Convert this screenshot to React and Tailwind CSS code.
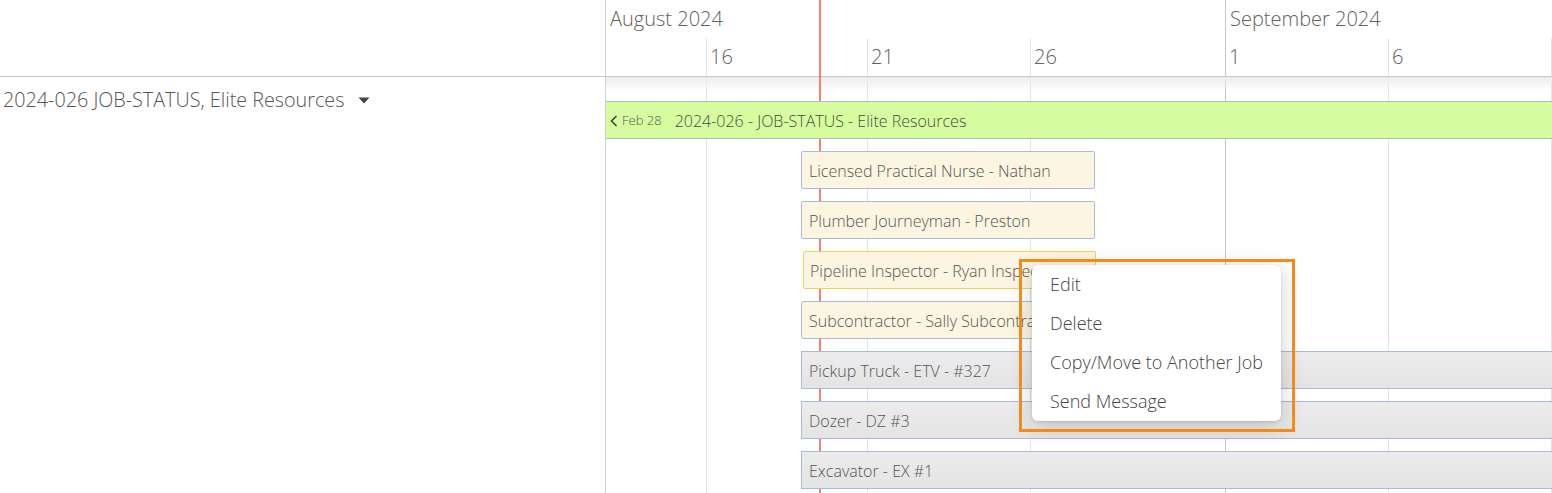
import React from "react";

const events = [
  { label: "Licensed Practical Nurse - Nathan", kind: "cream" },
  { label: "Plumber Journeyman - Preston", kind: "cream" },
  { label: "Pipeline Inspector - Ryan Inspector", kind: "yellow" },
  { label: "Subcontractor - Sally Subcontractor", kind: "cream" },
  { label: "Pickup Truck - ETV - #327", kind: "gray" },
  { label: "Dozer - DZ #3", kind: "gray" },
  { label: "Excavator - EX #1", kind: "gray" },
];

function EventBar({ label, kind }) {
  if (kind === "gray") {
    return (
      <div className="ml-[195px] h-[38px] shrink-0 flex items-center pt-[1px] pl-[7px] border border-r-0 border-[#a9bbdc] bg-gradient-to-b from-[#ececec] to-[#e4e4e4] text-[16px] text-[#555] whitespace-nowrap overflow-hidden">
        {label}
      </div>
    );
  }
  if (kind === "yellow") {
    return (
      <div className="ml-[197px] w-[293px] h-[38px] shrink-0 flex items-center pt-[1px] pl-[6px] border border-[#f2d35a] rounded-[2px] bg-[#fcf5e2] text-[16px] text-[#555] whitespace-nowrap overflow-hidden">
        {label}
      </div>
    );
  }
  return (
    <div className="ml-[195px] w-[294px] h-[38px] shrink-0 flex items-center pt-[1px] pl-[7px] border border-[#a9bbdc] rounded-[2px] bg-[#fcf5e2] text-[16px] text-[#555] whitespace-nowrap overflow-hidden">
      {label}
    </div>
  );
}

export default function App() {
  return (
    <div className="relative w-[1552px] h-[493px] overflow-hidden bg-white font-['Open_Sans',sans-serif] font-light text-[#555] flex flex-col">
      {/* header */}
      <div className="flex h-[77px] shrink-0 border-b border-[#c8c8c8]">
        <div className="w-[606px] shrink-0 border-r border-[#cfcfcf]" />
        <div className="flex-1 flex flex-col">
          <div className="h-[38px] flex">
            <div className="w-[619px] shrink-0 pl-[4px] pt-[5px] text-[20px] leading-[28px] text-[#606060]">
              August 2024
            </div>
            <div className="flex-1 border-l border-[#c8c8c8] pl-[4px] pt-[5px] text-[20px] leading-[28px] text-[#606060]">
              September 2024
            </div>
          </div>
          <div className="h-[38px] grid grid-cols-[100px_161px_163px_195px_163px_163px_1fr] text-[20px] leading-[28px] text-[#606060]">
            <div />
            <div className="border-l border-[#e3e3e3] pl-[3px] pt-[5px]">16</div>
            <div className="border-l border-[#e3e3e3] pl-[3px] pt-[5px]">21</div>
            <div className="border-l border-[#e3e3e3] pl-[3px] pt-[5px]">26</div>
            <div className="border-l border-[#c8c8c8] pl-[3px] pt-[5px]">1</div>
            <div className="border-l border-[#e3e3e3] pl-[3px] pt-[5px]">6</div>
            <div className="border-l border-[#e3e3e3]" />
          </div>
        </div>
      </div>

      {/* body */}
      <div className="flex flex-1 min-h-0">
        <div className="w-[606px] shrink-0 border-r border-[#cfcfcf] pl-[3px] pt-[9px]">
          <div className="flex items-center gap-[14px] text-[19.75px] leading-[28px] text-[#555]">
            <span>2024-026 JOB-STATUS, Elite Resources</span>
            <svg width="12" height="7" viewBox="0 0 12 7" className="mt-[1px]">
              <path d="M0.5 0.5 L11.5 0.5 L6 6.5 Z" fill="#444" />
            </svg>
          </div>
        </div>
        <div className="relative flex-1">
          {/* grid background */}
          <div className="absolute inset-0 grid grid-cols-[100px_161px_163px_195px_163px_163px_1fr]">
            <div />
            <div className="border-l border-[#e3e3e3]" />
            <div className="border-l border-[#e3e3e3]" />
            <div className="border-l border-[#e3e3e3]" />
            <div className="border-l border-[#c8c8c8]" />
            <div className="border-l border-[#e3e3e3]" />
            <div className="border-l border-[#e3e3e3]" />
          </div>
          <div className="absolute left-0 right-0 top-0 h-[14px] bg-gradient-to-b from-[#ececec] to-transparent" />
          {/* rows */}
          <div className="relative z-[2] flex flex-col gap-[12px] pt-[24px]">
            <div className="h-[38px] flex items-center pt-[1px] border-y border-[#a9bccb] bg-[#d6fe9e] whitespace-nowrap">
              <svg width="8" height="12" viewBox="0 0 8 12" className="ml-[4px]">
                <path d="M6.5 1 L1.5 6 L6.5 11" stroke="#333" strokeWidth="1.4" fill="none" />
              </svg>
              <span className="ml-[4px] text-[13px] text-[#555]">Feb 28</span>
              <span className="ml-[13px] text-[16px] text-[#4a4a4a]">2024-026 - JOB-STATUS - Elite Resources</span>
            </div>
            {events.map((e) => (
              <EventBar key={e.label} {...e} />
            ))}
          </div>
        </div>
      </div>

      {/* today line */}
      <div className="absolute top-0 bottom-0 left-[819px] w-[2px] bg-[#ef8275] z-[1]" />

      {/* context menu */}
      <div className="absolute left-[1032px] top-[265px] w-[249px] z-10 bg-white rounded-[6px] shadow-[0_4px_24px_rgba(0,0,0,0.18),0_1px_3px_rgba(0,0,0,0.12)] text-[18px] text-[#444]">
        <div className="h-[39px] flex items-center pl-[18px]">Edit</div>
        <div className="h-[39px] flex items-center pl-[18px]">Delete</div>
        <div className="h-[39px] flex items-center pl-[18px]">Copy/Move to Another Job</div>
        <div className="h-[39px] flex items-center pl-[18px]">Send Message</div>
      </div>

      {/* highlight annotation */}
      <div className="absolute left-[1019px] top-[259px] w-[276px] h-[173px] border-[3px] border-[#f28a1c] z-20 pointer-events-none" />
    </div>
  );
}
